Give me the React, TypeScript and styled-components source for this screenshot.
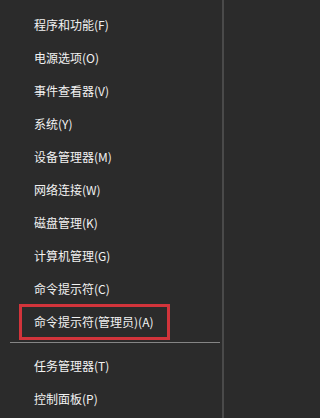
import styled, {createGlobalStyle} from "styled-components";

const GlobalStyle = createGlobalStyle`
  html, body {
    margin: 0;
    padding: 0;
    background-color: #2b2b2b;
  }
`;

const Menu = styled.div`
  width: 224px;
  height: 418px;
  box-sizing: border-box;
  padding-top: 8px;
  background-color: #2b2b2b;
  border-right: 2px solid #4a4a4a;
  font-family: "Noto Sans CJK SC", "Noto Sans", sans-serif;
  font-size: 12px;
  color: #f2f2f2;
`;

const Item = styled.div`
  height: 33px;
  display: flex;
  align-items: center;
  padding-left: 34px;
`;

const Label = styled.span<{ $marked?: boolean }>`
  position: relative;
  line-height: 16px;

  ${p => p.$marked && `
    &::after {
      content: "";
      position: absolute;
      left: -15px;
      right: -16px;
      top: -10px;
      bottom: -10px;
      border: 3px solid #d2343b;
    }
  `}
`;

const Separator = styled.div`
  height: 1px;
  margin: 4px 2px 6px 10px;
  background-color: #858585;
`;

type Entry = {
    label: string
    marked?: boolean
}

const topEntries: Entry[] = [
    {label: "程序和功能(F)"},
    {label: "电源选项(O)"},
    {label: "事件查看器(V)"},
    {label: "系统(Y)"},
    {label: "设备管理器(M)"},
    {label: "网络连接(W)"},
    {label: "磁盘管理(K)"},
    {label: "计算机管理(G)"},
    {label: "命令提示符(C)"},
    {label: "命令提示符(管理员)(A)", marked: true},
];

const bottomEntries: Entry[] = [
    {label: "任务管理器(T)"},
    {label: "控制面板(P)"},
];

function MenuItem(props: Readonly<Entry>) {
    return (
        <Item>
            <Label $marked={props.marked}>{props.label}</Label>
        </Item>
    );
}

export default function App() {
    return (
        <>
            <GlobalStyle/>
            <Menu>
                {topEntries.map(e => <MenuItem key={e.label} {...e}/>)}
                <Separator/>
                {bottomEntries.map(e => <MenuItem key={e.label} {...e}/>)}
            </Menu>
        </>
    );
}
